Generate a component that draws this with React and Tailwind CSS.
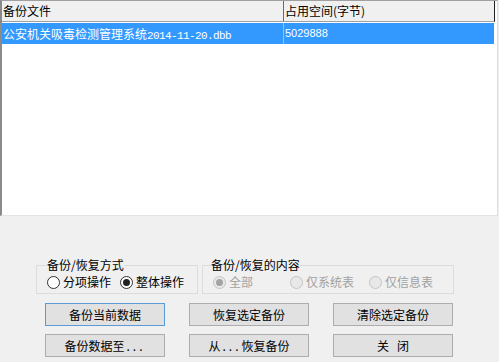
import React from 'react';

function Radio({ checked, disabled, label, className = '' }) {
  return (
    <div className={`flex items-center ${className}`}>
      <span
        className={`w-[13px] h-[13px] rounded-full border flex items-center justify-center shrink-0 ${
          disabled ? 'border-[#c4c4c4] bg-[#e8e8e8]' : 'border-[#333333] bg-white'
        }`}
      >
        {checked && (
          <span className={`w-[7px] h-[7px] rounded-full ${disabled ? 'bg-[#a3a3a3]' : 'bg-[#222222]'}`} />
        )}
      </span>
      <span className={`ml-[3px] leading-[16px] ${disabled ? 'text-[#a0a0a0]' : 'text-black'}`}>{label}</span>
    </div>
  );
}

function Btn({ children, focused }) {
  return (
    <button
      className={`w-[120px] h-[23px] bg-[#e1e1e1] border text-[12px] leading-[14px] text-black whitespace-pre ${
        focused ? 'border-[#5a9ad8]' : 'border-[#adadad]'
      }`}
    >
      {children}
    </button>
  );
}

export default function App() {
  return (
    <div className="w-[499px] h-[362px] bg-[#f0f0f0] overflow-hidden text-[12px] text-black font-['Noto_Sans_CJK_SC','Liberation_Sans',sans-serif]">
      {/* 备份列表 */}
      <div className="w-[498px] h-[216px] bg-white border-t border-l-2 border-r border-b border-t-[#a0a0a0] border-l-[#8a8a8a] border-r-[#dcdcdc] border-b-[#e3e3e3]">
        <div className="flex h-[21px] w-[493px] bg-[#f0f0f0] border-b border-r border-b-[#a0a0a0] border-r-[#222222]">
          <div className="w-[282px] border-r border-[#6b6b6b] pl-[1px] leading-[20px]">备份文件</div>
          <div className="flex-1 pl-[1px] leading-[20px]">占用空间(字节)</div>
        </div>
        <div className="flex h-[21px] w-[492px] mt-[1px] bg-[#3399ff] text-white">
          <div className="w-[282px] border-r border-[#8cc2f7] pl-[1px] leading-[21px] whitespace-nowrap overflow-hidden">
            公安机关吸毒检测管理系统
            <span className="font-['Liberation_Mono',monospace] text-[11px] tracking-[-0.6px]">2014-11-20.dbb</span>
          </div>
          <div className="flex-1 pl-[1px] leading-[21px] font-['Liberation_Sans',sans-serif] text-[11px]">5029888</div>
        </div>
      </div>

      {/* 选项 */}
      <div className="flex pl-[36px] pt-[42px] gap-[4px]">
        <fieldset className="w-[162px] h-[36px] border border-[#dcdcdc] pl-[10px]">
          <legend className="leading-[14px]">备份/恢复方式</legend>
          <div className="flex mt-[2px] h-[16px]">
            <Radio label="分项操作" className="w-[73px]" />
            <Radio label="整体操作" checked />
          </div>
        </fieldset>
        <fieldset className="w-[252px] h-[36px] border border-[#dcdcdc] pl-[8px]">
          <legend className="leading-[14px]">备份/恢复的内容</legend>
          <div className="flex mt-[2px] h-[16px] pl-[2px]">
            <Radio label="全部" checked disabled className="w-[77px]" />
            <Radio label="仅系统表" disabled className="w-[79px]" />
            <Radio label="仅信息表" disabled />
          </div>
        </fieldset>
      </div>

      {/* 按钮 */}
      <div className="grid grid-cols-[120px_120px_120px] gap-x-[24px] gap-y-[8px] pl-[45px] mt-[9px]">
        <Btn focused>备份当前数据</Btn>
        <Btn>恢复选定备份</Btn>
        <Btn>清除选定备份</Btn>
        <Btn>
          备份数据至<span className="tracking-[3px] ml-[2px]">...</span>
        </Btn>
        <Btn>
          从<span className="tracking-[3px] ml-[2px]">...</span>恢复备份
        </Btn>
        <Btn>关   闭</Btn>
      </div>
    </div>
  );
}
